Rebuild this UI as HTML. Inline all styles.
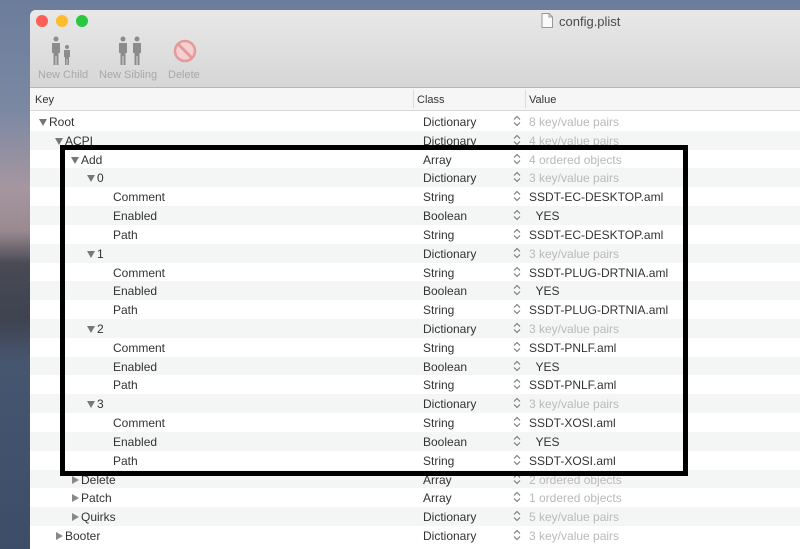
<!DOCTYPE html>
<html><head><meta charset="utf-8"><style>
*{margin:0;padding:0;box-sizing:border-box}
html,body{width:800px;height:549px;overflow:hidden}
body{position:relative;font-family:"Liberation Sans",sans-serif;background:linear-gradient(180deg,#6b7d9b 0%,#7b88a2 20%,#a596a0 34%,#9a8a90 42%,#4a4a55 48%,#3e4350 58%,#47566f 66%,#3d4d68 100%)}
.win{position:absolute;left:30px;top:10px;width:780px;height:560px;background:#fff;border-radius:6px 0 0 0;overflow:hidden}
.tb{position:absolute;left:0;top:0;width:100%;height:78px;background:linear-gradient(#e8e8e8,#d6d6d6);border-bottom:1px solid #b5b5b5}
.dot{position:absolute;top:5px;width:12px;height:12px;border-radius:50%}
.title{position:absolute;left:529px;top:4px;font-size:13px;color:#4a4a4a}
.tl{position:absolute;top:59px;font-size:11px;color:#a8a8a8}
.hdr{position:absolute;left:0;top:78px;width:100%;height:23px;background:#f6f6f6;border-bottom:1px solid #d8d8d8;font-size:11px;color:#333}
.hdr span{position:absolute;top:6px}
.sep{position:absolute;top:2px;width:1px;height:18px;background:#ddd}
.row{position:absolute;left:0;width:100%;height:18.82px;font-size:12px;color:#333}
.row.g{background:#f4f5f5}
.row span{position:absolute;top:3px;white-space:nowrap}
.v.d{color:#b9b9b9}
.st{position:absolute;left:483px;top:3px;width:8px;height:12px}
.box{position:absolute;left:60px;top:145px;width:628px;height:331px;border:5px solid #000}
</style></head><body>
<div class="win">
 <div class="tb">
  <div class="dot" style="left:6px;background:#fc5f57"></div>
  <div class="dot" style="left:26px;background:#fdbc2e"></div>
  <div class="dot" style="left:46px;background:#28c840"></div>
  <svg style="position:absolute;left:511px;top:3px" width="12" height="15" viewBox="0 0 12 15"><path d="M1 .5h7l3.5 3.5v10.5h-10.5z" fill="#fafafa" stroke="#999"/><path d="M8 .5v3.5h3.5" fill="none" stroke="#999"/></svg>
  <div class="title">config.plist</div>
  <svg style="position:absolute;left:20px;top:26px" width="24" height="29" viewBox="0 0 24 29" fill="#8c8c8c"><circle cx="6" cy="3" r="2.5"/><path d="M2 7h8v10h-1.5v12h-2v-9h-1v9h-2v-12h-1.5z"/><circle cx="17" cy="11" r="2"/><path d="M14 14h6v7h-1v8h-1.6v-6h-0.8v6h-1.6v-8h-1z"/></svg>
  <svg style="position:absolute;left:86px;top:26px" width="28" height="29" viewBox="0 0 28 29" fill="#8c8c8c"><circle cx="7" cy="3" r="2.5"/><path d="M3 7h8v10h-1.5v12h-2v-9h-1v9h-2v-12h-1.5z"/><circle cx="21" cy="3" r="2.5"/><path d="M17 7h8v10h-1.5v12h-2v-9h-1v9h-2v-12h-1.5z"/></svg>
  <svg style="position:absolute;left:143px;top:29px" width="24" height="24" viewBox="0 0 24 24"><circle cx="12" cy="12" r="10" fill="#f5d0d0" stroke="#e49a9a" stroke-width="2.5"/><path d="M5 5L19 19" stroke="#e49a9a" stroke-width="3"/></svg>
  <div class="tl" style="left:8px">New Child</div>
  <div class="tl" style="left:69px">New Sibling</div>
  <div class="tl" style="left:138px">Delete</div>
 </div>
 <div class="hdr"><span style="left:5px">Key</span><div class="sep" style="left:383px"></div><span style="left:387px">Class</span><div class="sep" style="left:495px"></div><span style="left:499px">Value</span></div>
 <div id="rows"></div>
</div>
<div class="box"></div>
<script>
var R=[[0,'d','Root','Dictionary','8 key/value pairs',1],[1,'d','ACPI','Dictionary','4 key/value pairs',1],[2,'d','Add','Array','4 ordered objects',1],[3,'d','0','Dictionary','3 key/value pairs',1],[4,'','Comment','String','SSDT-EC-DESKTOP.aml'],[4,'','Enabled','Boolean','  YES'],[4,'','Path','String','SSDT-EC-DESKTOP.aml'],[3,'d','1','Dictionary','3 key/value pairs',1],[4,'','Comment','String','SSDT-PLUG-DRTNIA.aml'],[4,'','Enabled','Boolean','  YES'],[4,'','Path','String','SSDT-PLUG-DRTNIA.aml'],[3,'d','2','Dictionary','3 key/value pairs',1],[4,'','Comment','String','SSDT-PNLF.aml'],[4,'','Enabled','Boolean','  YES'],[4,'','Path','String','SSDT-PNLF.aml'],[3,'d','3','Dictionary','3 key/value pairs',1],[4,'','Comment','String','SSDT-XOSI.aml'],[4,'','Enabled','Boolean','  YES'],[4,'','Path','String','SSDT-XOSI.aml'],[2,'r','Delete','Array','2 ordered objects',1],[2,'r','Patch','Array','1 ordered objects',1],[2,'r','Quirks','Dictionary','5 key/value pairs',1],[1,'r','Booter','Dictionary','3 key/value pairs',1]];
var h='';
R.forEach(function(r,i){
 var top=102+i*18.82, lv=r[0], x=8+lv*16, tri='';
 if(r[1]=='d') tri='<svg style="position:absolute;left:'+(x+1)+'px;top:7px" width="8" height="7"><path d="M0 0h8L4 7z" fill="#777"/></svg>';
 if(r[1]=='r') tri='<svg style="position:absolute;left:'+(x+2)+'px;top:6px" width="7" height="8"><path d="M0 0v8L7 4z" fill="#888"/></svg>';
 var kx = lv==4? 83 : x+11;
 h+='<div class="row'+(i%2?' g':'')+'" style="top:'+top+'px">'+tri+'<span style="left:'+kx+'px">'+r[2]+'</span><span style="left:393px">'+r[3]+'</span><svg class="st" viewBox="0 0 8 12"><path d="M1 4.5L4 1.5 7 4.5M1 7.5L4 10.5 7 7.5" fill="none" stroke="#777" stroke-width="1.1"/></svg><span class="v'+(r[5]?' d':'')+'" style="left:499px;white-space:pre">'+r[4]+'</span></div>';
});
document.getElementById('rows').innerHTML=h;
</script>
</body></html>
